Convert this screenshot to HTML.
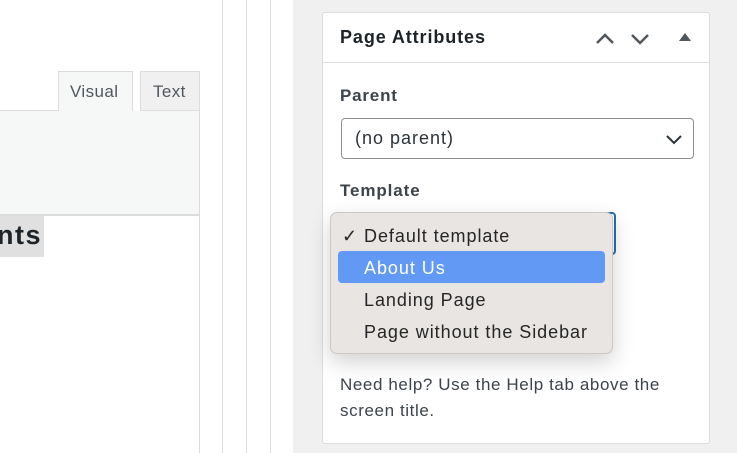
<!DOCTYPE html>
<html><head><meta charset="utf-8"><style>
*{box-sizing:border-box;margin:0;padding:0}
body{width:737px;height:453px;overflow:hidden;background:#fff;position:relative;font-family:"Liberation Sans",sans-serif;color:#1d2327}
.a{position:absolute}
.o{font-size:18px;line-height:24px;letter-spacing:0.95px}
</style></head><body>
<div class="a" style="left:0;top:110px;width:58px;height:1px;background:#dcdcde"></div>
<div class="a" style="left:58px;top:71px;width:75px;height:41px;background:#f6f7f7;border:1px solid #dcdcde;border-bottom:none;font-size:17px;color:#50575e;padding:10px 0 0 11px;letter-spacing:0.4px">Visual</div>
<div class="a" style="left:140px;top:71px;width:60px;height:40px;background:#f0f0f1;border:1px solid #dcdcde;font-size:17px;color:#50575e;padding:10px 0 0 12px;letter-spacing:0.4px">Text</div>
<div class="a" style="left:0;top:111px;width:200px;height:105px;background:#f6f7f7;border-right:1px solid #dcdcde;border-bottom:2px solid #dcdcde"></div>
<div class="a" style="left:0;top:216px;width:44px;height:41px;background:#e0e0e0;font-weight:bold;font-size:27px;color:#1d2327;padding-top:4px;letter-spacing:1.5px;overflow:hidden;white-space:nowrap"><span style="margin-left:-3px">nts</span></div>
<div class="a" style="left:199px;top:216px;width:1px;height:237px;background:#dcdcde"></div>
<div class="a" style="left:222px;top:0;width:1px;height:453px;background:#dcdcde"></div>
<div class="a" style="left:246px;top:0;width:1px;height:453px;background:#dcdcde"></div>
<div class="a" style="left:270px;top:0;width:1px;height:453px;background:#dcdcde"></div>
<div class="a" style="left:293px;top:0;width:444px;height:453px;background:#f0f0f1"></div>
<div class="a" style="left:322px;top:12px;width:388px;height:432px;background:#fff;border:1px solid #dcdcde;border-radius:3px"></div>
<div class="a" style="left:323px;top:62px;width:386px;height:1px;background:#dcdcde"></div>
<div class="a" style="left:340px;top:27px;font-size:18px;font-weight:bold;color:#1d2327;letter-spacing:0.9px">Page Attributes</div>
<svg class="a" style="left:590px;top:26px" width="110" height="24" viewBox="0 0 110 24">
<path d="M7 17 L15 9 L23 17" fill="none" stroke="#50575e" stroke-width="2.5"/>
<path d="M42 9 L50 17 L58 9" fill="none" stroke="#50575e" stroke-width="2.5"/>
<path d="M89 15 L95 7 L101 15 Z" fill="#50575e"/>
</svg>
<div class="a" style="left:340px;top:86px;font-size:17px;font-weight:bold;color:#3c434a;letter-spacing:0.8px">Parent</div>
<div class="a" style="left:341px;top:118px;width:353px;height:41px;border:1px solid #8c8f94;border-radius:4px;font-size:18px;color:#2c3338;padding:9px 0 0 13px;letter-spacing:1px">(no parent)</div>
<svg class="a" style="left:664px;top:131px" width="20" height="16"><path d="M3 5 L10 12 L17 5" fill="none" stroke="#2c3338" stroke-width="2"/></svg>
<div class="a" style="left:340px;top:181px;font-size:17px;font-weight:bold;color:#3c434a;letter-spacing:0.9px">Template</div>
<div class="a" style="left:500px;top:212px;width:116px;height:43px;border:2px solid #2271b1;border-radius:4px"></div>
<div class="a" style="left:330px;top:212px;width:283px;height:142px;background:#e8e5e3;border:1px solid #cbc8c6;border-radius:7px;box-shadow:0 8px 22px rgba(0,0,0,0.18)"></div>
<div class="a" style="left:338px;top:251px;width:267px;height:32px;background:#6199f4;border-radius:4px"></div>
<div class="a o" style="left:342px;top:224px;color:#262626">✓</div>
<div class="a o" style="left:364px;top:224px;color:#262626">Default template</div>
<div class="a o" style="left:364px;top:256px;color:#fff">About Us</div>
<div class="a o" style="left:364px;top:288px;color:#262626">Landing Page</div>
<div class="a o" style="left:364px;top:320px;color:#262626">Page without the Sidebar</div>
<div class="a" style="left:340px;top:372px;width:345px;font-size:17px;color:#3c434a;line-height:26px;letter-spacing:0.6px">Need help? Use the Help tab above the screen title.</div>
</body></html>
